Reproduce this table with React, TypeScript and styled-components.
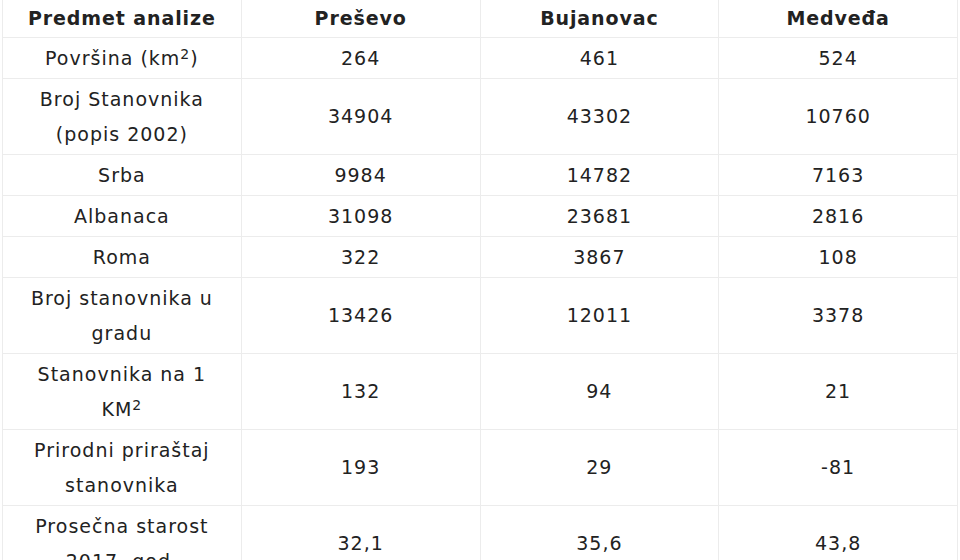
import React from "react";
import styled, { createGlobalStyle } from "styled-components";

const Global = createGlobalStyle`
  html, body { margin: 0; padding: 0; background: #fff; }
  body { font-family: "DejaVu Sans", Verdana, sans-serif; color: #222; }
`;

const Wrap = styled.div`
  padding: 0 3px 0 2px;
`;

const Table = styled.table`
  width: 956px;
  border-collapse: collapse;
  table-layout: fixed;
  font-size: 19px;
  line-height: 35px;
  letter-spacing: 1px;
`;

const Th = styled.th`
  border: 1px solid #ececec;
  border-top: none;
  padding: 0.5px 4px 1.5px;
  font-weight: bold;
  letter-spacing: 0.9px;
  text-align: center;
  color: #222;
`;

const Td = styled.td`
  border: 1px solid #ececec;
  padding: 2.5px 4px;
  text-align: center;
  vertical-align: middle;
  color: #222;
`;

const Sup = styled.sup`
  font-size: 14px;
  line-height: 0;
  vertical-align: 6px;
`;

type Row = { label: React.ReactNode; v: string[] };

const rows: Row[] = [
  { label: <>Površina (km<Sup>2</Sup>)</>, v: ["264", "461", "524"] },
  { label: <>Broj Stanovnika<br />(popis 2002)</>, v: ["34904", "43302", "10760"] },
  { label: "Srba", v: ["9984", "14782", "7163"] },
  { label: "Albanaca", v: ["31098", "23681", "2816"] },
  { label: "Roma", v: ["322", "3867", "108"] },
  { label: <>Broj stanovnika u<br />gradu</>, v: ["13426", "12011", "3378"] },
  { label: <>Stanovnika na 1<br />KM<Sup>2</Sup></>, v: ["132", "94", "21"] },
  { label: <>Prirodni priraštaj<br />stanovnika</>, v: ["193", "29", "-81"] },
  { label: <>Prosečna starost<br />2017. god.</>, v: ["32,1", "35,6", "43,8"] },
];

export default function App() {
  return (
    <>
      <Global />
      <Wrap>
        <Table>
          <thead>
            <tr>
              <Th>Predmet analize</Th>
              <Th>Preševo</Th>
              <Th>Bujanovac</Th>
              <Th>Medveđa</Th>
            </tr>
          </thead>
          <tbody>
            {rows.map((r, i) => (
              <tr key={i}>
                <Td>{r.label}</Td>
                {r.v.map((x, j) => (
                  <Td key={j}>{x}</Td>
                ))}
              </tr>
            ))}
          </tbody>
        </Table>
      </Wrap>
    </>
  );
}
